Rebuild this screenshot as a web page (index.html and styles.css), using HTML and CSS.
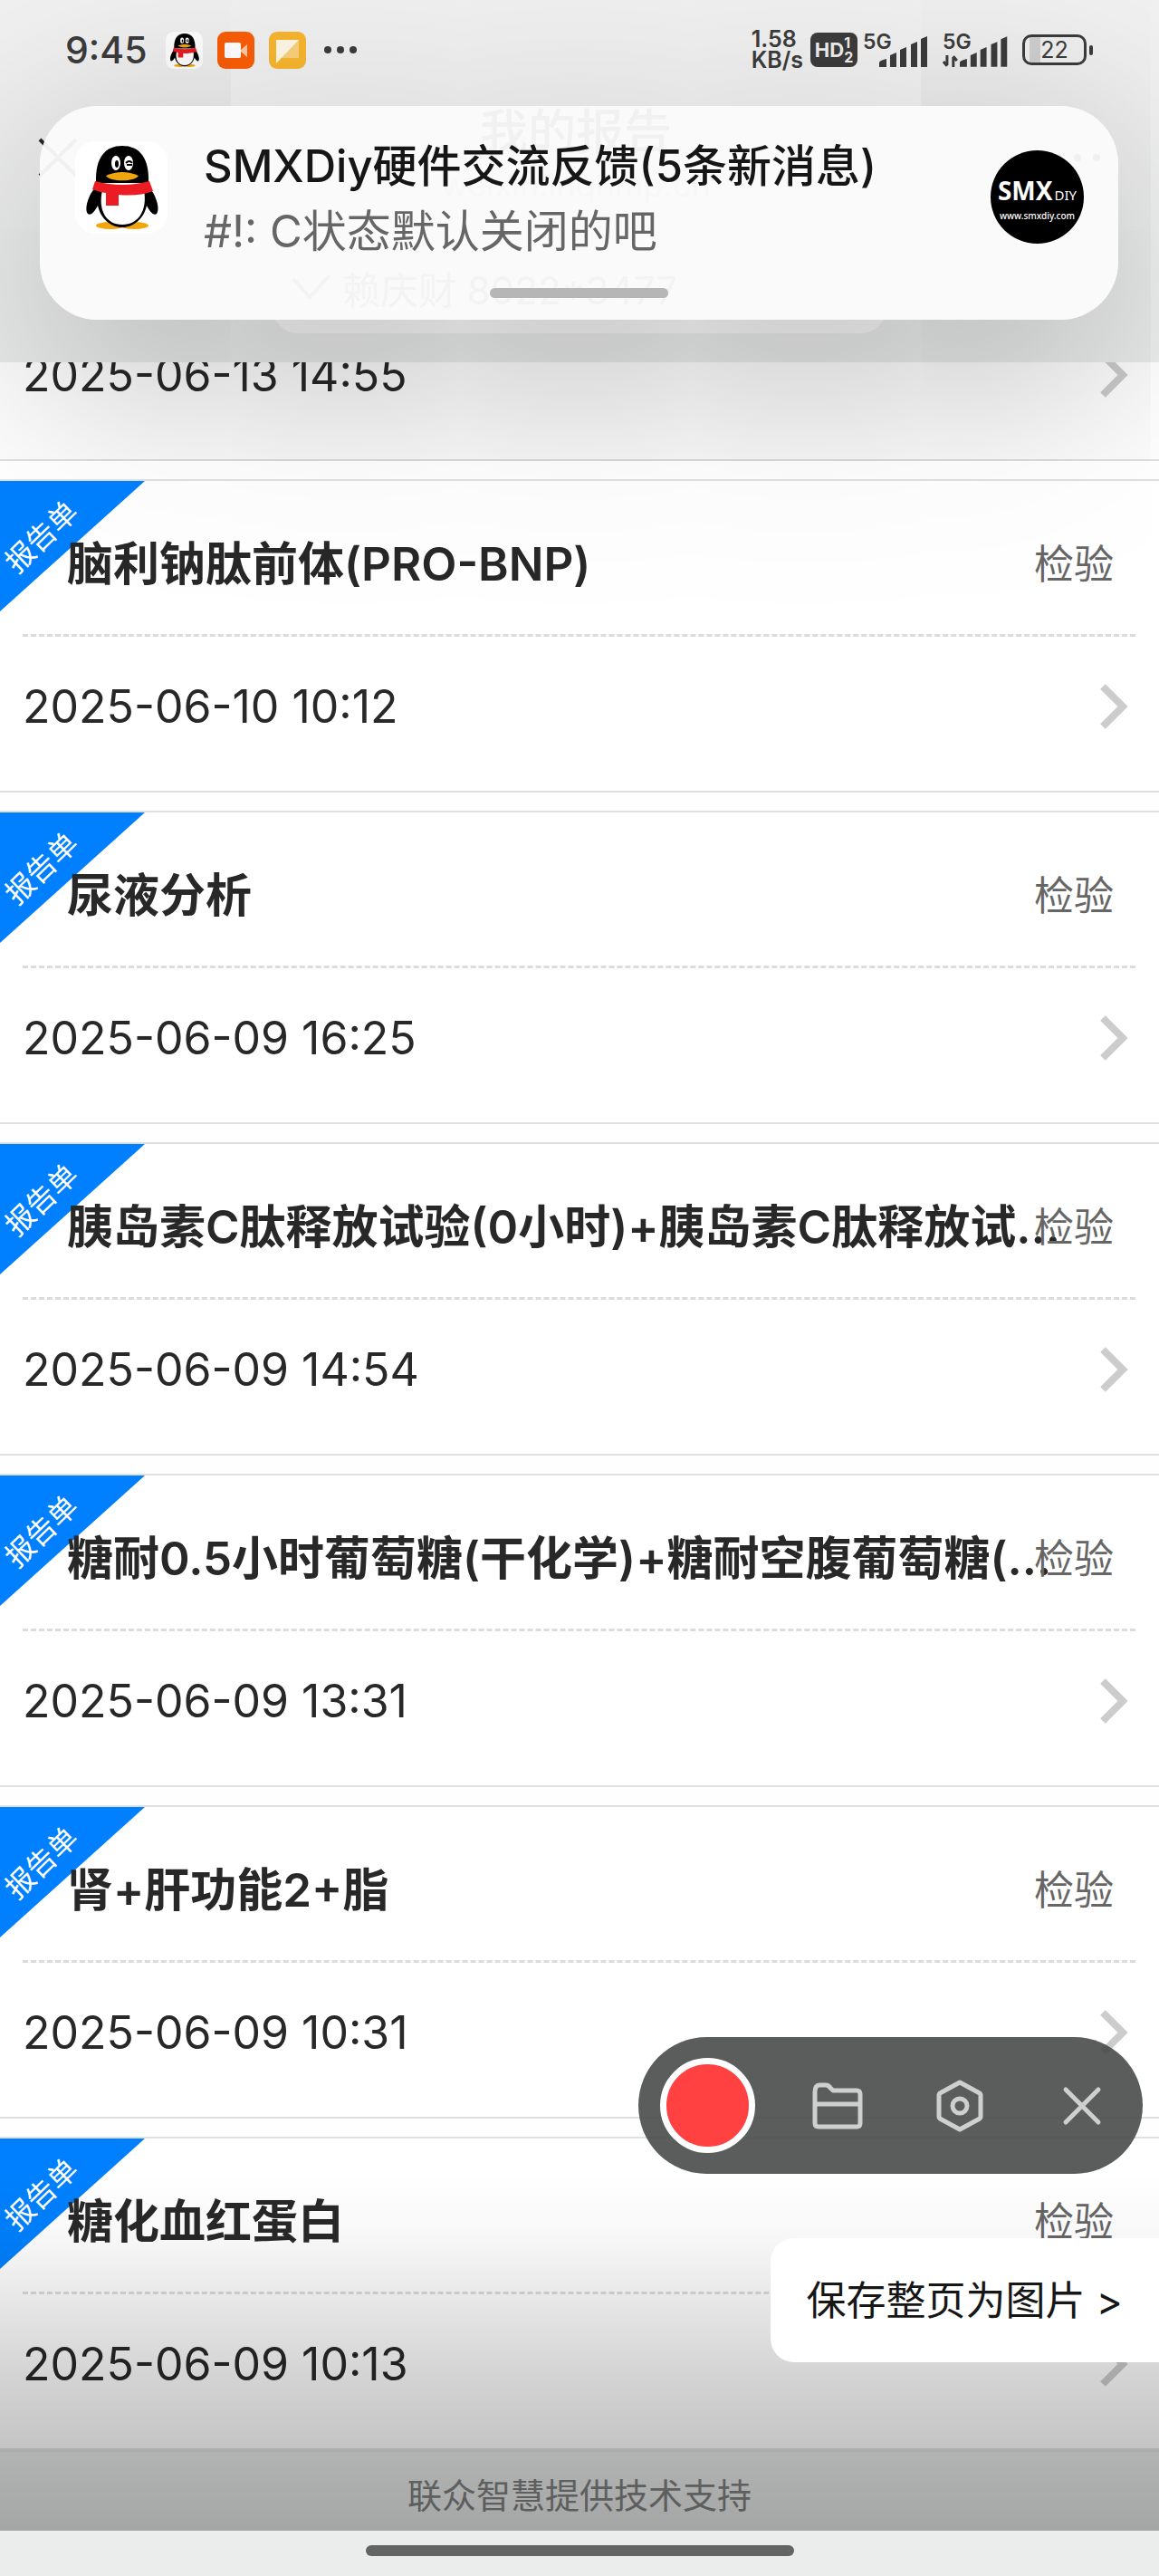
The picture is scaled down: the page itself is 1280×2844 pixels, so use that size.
FILE: index.html
```html
<!DOCTYPE html>
<html lang="zh-CN">
<head>
  <meta charset="UTF-8" />
  <meta name="viewport" content="width=device-width, initial-scale=1.0"/>
  <title>我的报告</title>
  <link rel="stylesheet" href="styles.css">
</head>
<body>
  <!-- shared shapes -->
  <svg class="defs" width="0" height="0" aria-hidden="true">
    <symbol id="penguin" viewBox="0 0 102 102">
      <rect width="102" height="102" rx="22" fill="#fff"/>
      <ellipse cx="39" cy="93" rx="16" ry="4" fill="#f2a60d"/>
      <ellipse cx="65" cy="93" rx="16" ry="4" fill="#f2a60d"/>
      <path d="M24 49C14 59 10 75 14 80c3 3 8-3 11-9 3 14 14 24 27 24s24-10 27-24c3 6 8 12 11 9 4-5 0-21-10-31z" fill="#000"/>
      <path d="M23 46C22 18 33 5 52 5s30 13 29 41z" fill="#000"/>
      <path d="M30 54h46c4 22-6 38-24 38S25 76 30 54z" fill="#fff"/>
      <ellipse cx="45" cy="24" rx="5" ry="8" fill="#fff"/>
      <ellipse cx="59" cy="24" rx="5" ry="8" fill="#fff"/>
      <ellipse cx="46" cy="25" rx="2" ry="4" fill="#000"/>
      <path d="M56 24q4-4 7 0M57 26h6" fill="none" stroke="#000" stroke-width="2"/>
      <path d="M34 38q18-8 36 0c-4 7-32 7-36 0z" fill="#f2a60d"/>
      <path d="M22 44q30 8 60 0l4 11q-16 6-38 4v12H34V57q-8-1-15-4z" fill="#eb1c23"/>
    </symbol>
    <symbol id="signal" viewBox="0 0 54 34">
      <path d="M0 34v-5q0-2 8-4v9zM12 34V21l7-3v16zM23 34V15l7-3v22zM35 34V9l7-3v28zM46 34V3l7-3v34z" fill="currentColor"/>
    </symbol>
    <symbol id="chevron" viewBox="0 0 32 52">
      <path d="M4 4l22 22L4 48" fill="none" stroke="currentColor" stroke-width="8"/>
    </symbol>
  </svg>

  <header class="header">
    <div class="status-bar">
      <span class="clock">9:45</span>
      <div class="status-apps">
        <svg class="app-icon"><use href="#penguin"/></svg>
        <svg class="app-icon" viewBox="0 0 41 41">
          <rect width="41" height="41" rx="9" fill="#fb5d07"/>
          <rect x="8" y="12" width="18" height="17" rx="2" fill="#fff"/>
          <path d="M26 20l7-6v14l-7-6z" fill="#ffc9a8"/>
        </svg>
        <svg class="app-icon" viewBox="0 0 41 41">
          <rect width="41" height="41" rx="9" fill="#f8b62f"/>
          <path d="M8 9h25v20H8z" fill="#fbd27c"/>
          <path d="M8 9h25L8 35z" fill="#fff8e6"/>
        </svg>
        <svg class="more" viewBox="0 0 36 8"><circle cx="4" cy="4" r="4"/><circle cx="18" cy="4" r="4"/><circle cx="32" cy="4" r="4"/></svg>
      </div>
      <div class="net-speed">1.58<br>KB/s</div>
      <div class="hd">HD<span class="hd-sims">1<br>2</span></div>
      <div class="sim"><span>5G</span><svg class="signal"><use href="#signal"/></svg></div>
      <div class="sim sim-data">
        <span>5G</span>
        <svg class="arrows" viewBox="0 0 17 13"><path d="M5 0v11M1 7l4 5M12 13V2M16 6l-4-5" fill="none" stroke="currentColor" stroke-width="3"/></svg>
        <svg class="signal"><use href="#signal"/></svg>
      </div>
      <div class="battery">22</div>
    </div>

    <div class="nav">
      <svg class="nav-close" viewBox="0 0 44 44"><path d="M2 2l40 40M42 2L2 42" fill="none" stroke="currentColor" stroke-width="4"/></svg>
      <div class="nav-title">
        <h1>我的报告</h1>
        <p>weixin.lnqhmp.cn</p>
      </div>
      <svg class="nav-more" viewBox="0 0 52 10"><circle cx="5" cy="5" r="4"/><circle cx="26" cy="5" r="4"/><circle cx="47" cy="5" r="4"/></svg>
    </div>
    <div class="patient">
      <svg class="patient-check" viewBox="0 0 44 30"><path d="M2 6l18 20L42 2" fill="none" stroke="currentColor" stroke-width="4"/></svg>
      <span>赖庆财 8022*3477</span>
    </div>
  </header>

  <section class="notification">
    <svg class="notification-icon"><use href="#penguin"/></svg>
    <div class="notification-text">
      <h2>SMXDiy硬件交流反馈(5条新消息)</h2>
      <p>#!: C状态默认关闭的吧</p>
    </div>
    <div class="avatar">
      <div class="avatar-name"><b>SMX</b><span>DIY</span></div>
      <div class="avatar-url">www.smxdiy.com</div>
    </div>
    <div class="notification-handle"></div>
  </section>

  <main class="reports">
    <article class="report">
      <a class="report-foot" href="#"><time>2025-06-13 14:55</time><svg class="chevron"><use href="#chevron"/></svg></a>
    </article>
    <article class="report">
      <div class="ribbon"><span>报告单</span></div>
      <div class="report-head"><h3>脑利钠肽前体(PRO-BNP)</h3><span class="kind">检验</span></div>
      <a class="report-foot" href="#"><time>2025-06-10 10:12</time><svg class="chevron"><use href="#chevron"/></svg></a>
    </article>
    <article class="report">
      <div class="ribbon"><span>报告单</span></div>
      <div class="report-head"><h3>尿液分析</h3><span class="kind">检验</span></div>
      <a class="report-foot" href="#"><time>2025-06-09 16:25</time><svg class="chevron"><use href="#chevron"/></svg></a>
    </article>
    <article class="report">
      <div class="ribbon"><span>报告单</span></div>
      <div class="report-head"><h3>胰岛素C肽释放试验(0小时)+胰岛素C肽释放试...</h3><span class="kind">检验</span></div>
      <a class="report-foot" href="#"><time>2025-06-09 14:54</time><svg class="chevron"><use href="#chevron"/></svg></a>
    </article>
    <article class="report">
      <div class="ribbon"><span>报告单</span></div>
      <div class="report-head"><h3>糖耐0.5小时葡萄糖(干化学)+糖耐空腹葡萄糖(...</h3><span class="kind">检验</span></div>
      <a class="report-foot" href="#"><time>2025-06-09 13:31</time><svg class="chevron"><use href="#chevron"/></svg></a>
    </article>
    <article class="report">
      <div class="ribbon"><span>报告单</span></div>
      <div class="report-head"><h3>肾+肝功能2+脂</h3><span class="kind">检验</span></div>
      <a class="report-foot" href="#"><time>2025-06-09 10:31</time><svg class="chevron"><use href="#chevron"/></svg></a>
    </article>
    <article class="report">
      <div class="ribbon"><span>报告单</span></div>
      <div class="report-head"><h3>糖化血红蛋白</h3><span class="kind">检验</span></div>
      <a class="report-foot" href="#"><time>2025-06-09 10:13</time><svg class="chevron"><use href="#chevron"/></svg></a>
    </article>
  </main>

  <footer class="support">联众智慧提供技术支持</footer>
  <div class="home-bar"><div class="home-pill"></div></div>

  <div class="bottom-shade"></div>

  <div class="recorder">
    <button class="record" aria-label="录制"></button>
    <button class="tool" aria-label="文件">
      <svg viewBox="0 0 58 58"><path d="M4 14q0-8 5-8h7q3 0 5 3l3 3h26q4 0 4 4v32q0 4-4 4H8q-4 0-4-4zM4 27h50"/></svg>
    </button>
    <button class="tool" aria-label="设置">
      <svg viewBox="0 0 58 58"><path d="M29 3l22 12q1 1 1 2v24q0 1-1 2L29 55 7 43q-1-1-1-2V17q0-1 1-2z"/><circle cx="29" cy="29" r="8"/></svg>
    </button>
    <button class="tool" aria-label="关闭">
      <svg viewBox="0 0 58 58"><path d="M11 11l36 36M47 11L11 47"/></svg>
    </button>
  </div>

  <button class="save-page">保存整页为图片 &gt;</button>
</body>
</html>
```
FILE: styles.css
```css
* {
  margin: 0;
  padding: 0;
  box-sizing: border-box;
}

body {
  position: relative;
  background: #fefefe;
  color: #282828;
  font-family: Inter, "Noto Sans CJK SC", sans-serif;
  overflow-x: hidden;
}

button {
  border: none;
  background: none;
  font: inherit;
  color: inherit;
  cursor: pointer;
}

.defs {
  position: absolute;
}

/* header */
.header {
  position: relative;
  z-index: 1;
  height: 400px;
  background: linear-gradient(#f1f1f1, #ebedec);
}

.status-bar {
  display: flex;
  align-items: center;
  height: 110px;
  padding: 0 80px 0 72px;
  color: #3c3c3c;
}

.clock {
  font-size: 41px;
  font-weight: 500;
}

.status-apps {
  display: flex;
  align-items: center;
  gap: 16px;
  margin-left: 20px;
  margin-right: auto;
}

.app-icon {
  width: 41px;
  height: 41px;
}

.more {
  width: 36px;
  height: 8px;
  margin-left: 4px;
  fill: currentColor;
}

.net-speed {
  font-size: 25px;
  line-height: 23px;
  font-weight: 600;
}

.hd {
  display: flex;
  align-items: center;
  justify-content: center;
  width: 52px;
  height: 38px;
  margin-left: 8px;
  border-radius: 8px;
  background: #3c3c3c;
  color: #eee;
  font-size: 22px;
  font-weight: 700;
}

.hd-sims {
  font-size: 16px;
  line-height: 16px;
}

.sim {
  position: relative;
  display: flex;
  align-items: flex-end;
  justify-content: flex-end;
  width: 72px;
  height: 38px;
  margin-left: 6px;
  font-size: 23px;
  font-weight: 600;
}

.sim span {
  position: absolute;
  left: 0;
  top: 0;
  line-height: 20px;
}

.sim-data {
  margin-left: 16px;
}

.arrows {
  width: 17px;
  height: 13px;
  margin-right: 2px;
}

.signal {
  width: 54px;
  height: 34px;
}

.battery {
  position: relative;
  width: 71px;
  height: 34px;
  margin-left: 16px;
  border: 3px solid #3c3c3c;
  border-radius: 10px;
  background: linear-gradient(90deg, transparent 5px, #d0d0d0 5px, #d0d0d0 17px, transparent 17px);
  font-size: 25px;
  line-height: 28px;
  text-align: center;
}

.battery::after {
  content: "";
  position: absolute;
  right: -10px;
  top: 9px;
  width: 4px;
  height: 11px;
  border-radius: 2px;
  background: #3c3c3c;
}

.nav {
  display: flex;
  align-items: center;
  justify-content: space-between;
  height: 124px;
  padding: 4px 42px 0;
}

.nav-close {
  width: 44px;
  height: 44px;
}

.nav-title {
  text-align: center;
}

.nav-title h1 {
  font-size: 53px;
  line-height: 60px;
  font-weight: 500;
}

.nav-title p {
  font-size: 36px;
  line-height: 56px;
  color: #aaa;
}

.nav-more {
  width: 52px;
  height: 10px;
  margin-right: 22px;
  margin-left: -22px;
}

.patient {
  display: flex;
  align-items: center;
  justify-content: center;
  gap: 12px;
  width: 680px;
  height: 98px;
  margin: 36px auto 0;
  padding: 0 210px 4px 0;
  border-radius: 30px;
  background: #f8f8f8;
  color: #555;
  font-size: 42px;
  white-space: nowrap;
}

.patient-check {
  width: 44px;
  height: 30px;
}

/* notification */
.notification {
  position: absolute;
  z-index: 2;
  top: 117px;
  left: 44px;
  right: 45px;
  display: flex;
  height: 236px;
  padding: 39px 38px 0 39px;
  border-radius: 64px;
  background: rgba(250, 250, 250, 0.96);
  box-shadow: 0 60px 260px rgba(0, 0, 0, 0.3);
}

.notification-icon {
  width: 102px;
  height: 102px;
}

.notification-text {
  flex: 1;
  margin-left: 40px;
}

.notification-text h2 {
  color: #161616;
  font-size: 49px;
  line-height: 56px;
  font-weight: 500;
}

.notification-text p {
  margin-top: 8px;
  color: #666;
  font-size: 49px;
  line-height: 72px;
}

.avatar {
  display: flex;
  flex-direction: column;
  align-items: center;
  width: 103px;
  height: 103px;
  margin-top: 10px;
  padding-top: 28px;
  border-radius: 50%;
  background: #000;
  color: #fff;
  font-family: "Noto Sans", sans-serif;
}

.avatar-name {
  display: flex;
  align-items: baseline;
  gap: 2px;
  font-size: 15px;
  line-height: 32px;
}

.avatar-name b {
  font-size: 28px;
}

.avatar-url {
  font-size: 10px;
  line-height: 14px;
  font-weight: 500;
}

.notification-handle {
  position: absolute;
  left: 50%;
  bottom: 24px;
  width: 197px;
  height: 11px;
  margin-left: -99px;
  border-radius: 6px;
  background: #b6b6b6;
}

/* report list, scrolled part way under the header */
.reports {
  display: flex;
  flex-direction: column;
  gap: 20px;
  margin-top: -65px;
}

.report {
  position: relative;
  border-top: 2px solid #e0e0e0;
  border-bottom: 2px solid #e0e0e0;
  background: #fff;
}

.ribbon {
  position: absolute;
  top: 0;
  left: 0;
  width: 160px;
  height: 144px;
  background: #0080fe;
  clip-path: polygon(0 0, 100% 0, 0 100%);
}

.ribbon span {
  position: absolute;
  left: -4px;
  top: 38px;
  width: 100px;
  color: #fff;
  font-size: 32px;
  line-height: 48px;
  text-align: center;
  transform: rotate(-44deg);
}

.report-head {
  position: relative;
  display: flex;
  align-items: center;
  height: 172px;
  margin: 0 26px 0 25px;
  padding: 14px 24px 0 49px;
  border-bottom: 3px dashed #dcdcdc;
}

.report-head h3 {
  font-size: 51px;
  line-height: 60px;
  font-weight: 600;
  white-space: nowrap;
}

.kind {
  position: absolute;
  right: 24px;
  color: #666;
  font-size: 44px;
  line-height: 60px;
}

.report-foot {
  display: flex;
  align-items: center;
  justify-content: space-between;
  height: 170px;
  padding: 0 34px 16px 25px;
  color: #282828;
  font-size: 50px;
  text-decoration: none;
}

.chevron {
  width: 32px;
  height: 52px;
  color: #ccc;
}

/* bottom */
.support {
  height: 89px;
  border-top: 2px solid #e0e0e0;
  background: #e8e9e9;
  color: #7f8080;
  font-size: 38px;
  line-height: 96px;
  text-align: center;
}

.home-bar {
  height: 50px;
  padding-top: 16px;
  background: #ebecec;
}

.home-pill {
  width: 473px;
  height: 12px;
  margin: 0 auto;
  border-radius: 6px;
  background: #636564;
}

.bottom-shade {
  position: absolute;
  left: 0;
  right: 0;
  bottom: 50px;
  height: 394px;
  background: linear-gradient(rgba(0, 0, 0, 0), rgba(0, 0, 0, 0.03) 18%, rgba(0, 0, 0, 0.17) 56%, rgba(0, 0, 0, 0.23) 77%, rgba(0, 0, 0, 0.29));
  pointer-events: none;
}

.recorder {
  position: absolute;
  right: 18px;
  bottom: 444px;
  display: flex;
  align-items: center;
  gap: 77px;
  height: 151px;
  padding: 0 38px 0 24px;
  border-radius: 76px;
  background: rgba(68, 69, 69, 0.88);
}

.record {
  width: 105px;
  height: 105px;
  margin-right: -15px;
  border: 7px solid #fff;
  border-radius: 50%;
  background: #ff4141;
}

.tool {
  width: 58px;
  height: 58px;
}

.tool svg {
  display: block;
  width: 58px;
  height: 58px;
  fill: none;
  stroke: #cfcfcf;
  stroke-width: 5;
  stroke-linecap: round;
  stroke-linejoin: round;
}

.save-page {
  position: absolute;
  right: 0;
  bottom: 236px;
  height: 137px;
  padding: 0 40px 6px;
  border-radius: 26px 0 0 26px;
  background: #fff;
  color: #161616;
  font-size: 44px;
}
```
